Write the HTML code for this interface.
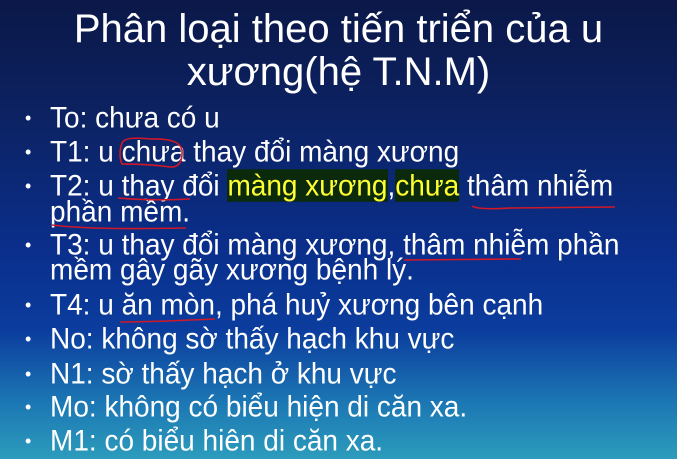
<html><head><style>
body{margin:0;width:677px;height:459px;overflow:hidden;font-family:"Liberation Sans",sans-serif;color:#fff;
background:linear-gradient(180deg,#0b1848 0%,#0c2262 25%,#0a2f8c 55%,#0b3d9e 72%,#1c78b4 88%,#2c9cbc 100%);position:relative}
.t{position:absolute;left:0;width:677px;text-align:center;font-size:40px;line-height:42px}
.l{position:absolute;left:50px;font-size:28px;line-height:28px;white-space:nowrap;transform:scaleY(1.05);transform-origin:0 50%}
.b{position:absolute;left:25px;font-size:18px}
.h{background:#0b2a0c;color:#ffff30}
svg{position:absolute;left:0;top:0}
</style></head><body>
<div class="t" style="top:8px">Phân loại theo tiến triển của u</div>
<div class="t" style="top:51px">xương(hệ T.N.M)</div>
<div class="l" style="top:104px">To: chưa có u</div>
<div class="l" style="top:138px">T1: u chưa thay đổi màng xương</div>
<div class="l" style="top:172px">T2: u thay đổi <span class="h">màng xương</span>,<span class="h">chưa</span> thâm nhiễm</div>
<div class="l" style="top:198px">phần mềm.</div>
<div class="l" style="top:231px">T3: u thay đổi màng xương, thâm nhiễm phần</div>
<div class="l" style="top:256px">mềm gây gãy xương bệnh lý.</div>
<div class="l" style="top:291px">T4: u ăn mòn, phá huỷ xương bên cạnh</div>
<div class="l" style="top:325px">No: không sờ thấy hạch khu vực</div>
<div class="l" style="top:360px">N1: sờ thấy hạch ở khu vực</div>
<div class="l" style="top:393px">Mo: không có biểu hiện di căn xa.</div>
<div class="l" style="top:427px">M1: có biểu hiên di căn xa.</div>
<div class="b" style="top:108px">•</div><div class="b" style="top:142px">•</div><div class="b" style="top:176px">•</div><div class="b" style="top:235px">•</div><div class="b" style="top:295px">•</div><div class="b" style="top:329px">•</div><div class="b" style="top:364px">•</div><div class="b" style="top:397px">•</div><div class="b" style="top:431px">•</div>
<svg width="677" height="459" fill="none" stroke="#d01828" stroke-width="1.6">
<path d="M122 143 Q125 136 150 139 Q180 138 182 150 Q183 168 170 167 Q150 164 122 164 Q118 155 122 143"/>
<path d="M118 198 Q150 201 190 199"/>
<path d="M472 206 Q478 210 510 208 L615 207"/>
<path d="M52 225 Q90 230 186 228"/>
<path d="M404 260 L521 259"/>
<path d="M120 322 Q150 322 215 319"/>
</svg>
</body></html>
